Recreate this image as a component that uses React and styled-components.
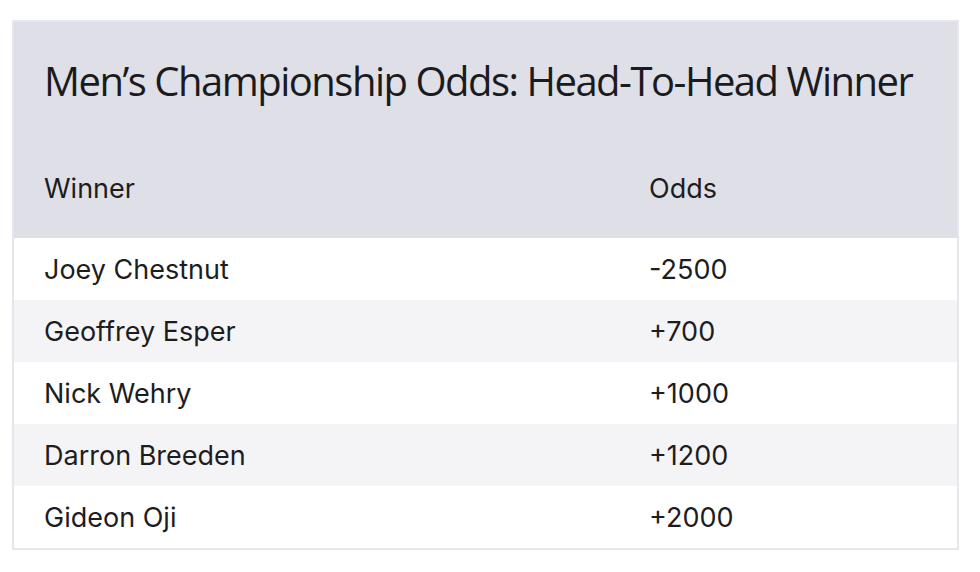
import React from "react";
import styled, { createGlobalStyle } from "styled-components";

const GlobalStyle = createGlobalStyle`
  body {
    margin: 0;
    background: #ffffff;
    font-family: Inter, "Liberation Sans", sans-serif;
    color: #1d1d1f;
  }
`;

const Page = styled.div`
  padding: 20px 21px 20px 12px;
`;

const Card = styled.div`
  border: 2px solid #e6e6ec;
  background: #ffffff;
`;

const Title = styled.h2`
  margin: 0;
  padding: 30px 30px 28px 30px;
  background: #dfe0e7;
  font-family: "Open Sans", sans-serif;
  font-weight: 500;
  font-size: 40px;
  letter-spacing: -1.5px;
  line-height: 58px;
  height: 58px;
  white-space: nowrap;
  color: #1b1b1d;
`;

const Table = styled.table`
  width: 100%;
  border-collapse: collapse;
  table-layout: fixed;
`;

const HeadRow = styled.tr`
  background: #dfe0e7;
`;

const HeadCell = styled.th`
  text-align: left;
  font-weight: 400;
  font-size: 27px;
  height: 100px;
  padding: 0 30px;
  vertical-align: middle;
  width: ${({ $w }) => $w || "auto"};
`;

const Row = styled.tr`
  background: ${({ $striped }) => ($striped ? "#f4f4f6" : "#ffffff")};
`;

const Cell = styled.td`
  font-size: 27px;
  height: 62px;
  padding: 0 30px;
  vertical-align: middle;
`;

const ODDS = [
  ["Joey Chestnut", "-2500"],
  ["Geoffrey Esper", "+700"],
  ["Nick Wehry", "+1000"],
  ["Darron Breeden", "+1200"],
  ["Gideon Oji", "+2000"],
];

export default function App() {
  return (
    <Page>
      <GlobalStyle />
      <Card>
        <Title>Men’s Championship Odds: Head-To-Head Winner</Title>
        <Table>
          <thead>
            <HeadRow>
              <HeadCell $w="545px">Winner</HeadCell>
              <HeadCell>Odds</HeadCell>
            </HeadRow>
          </thead>
          <tbody>
            {ODDS.map(([name, odds], i) => (
              <Row key={name} $striped={i % 2 === 1}>
                <Cell>{name}</Cell>
                <Cell>{odds}</Cell>
              </Row>
            ))}
          </tbody>
        </Table>
      </Card>
    </Page>
  );
}
